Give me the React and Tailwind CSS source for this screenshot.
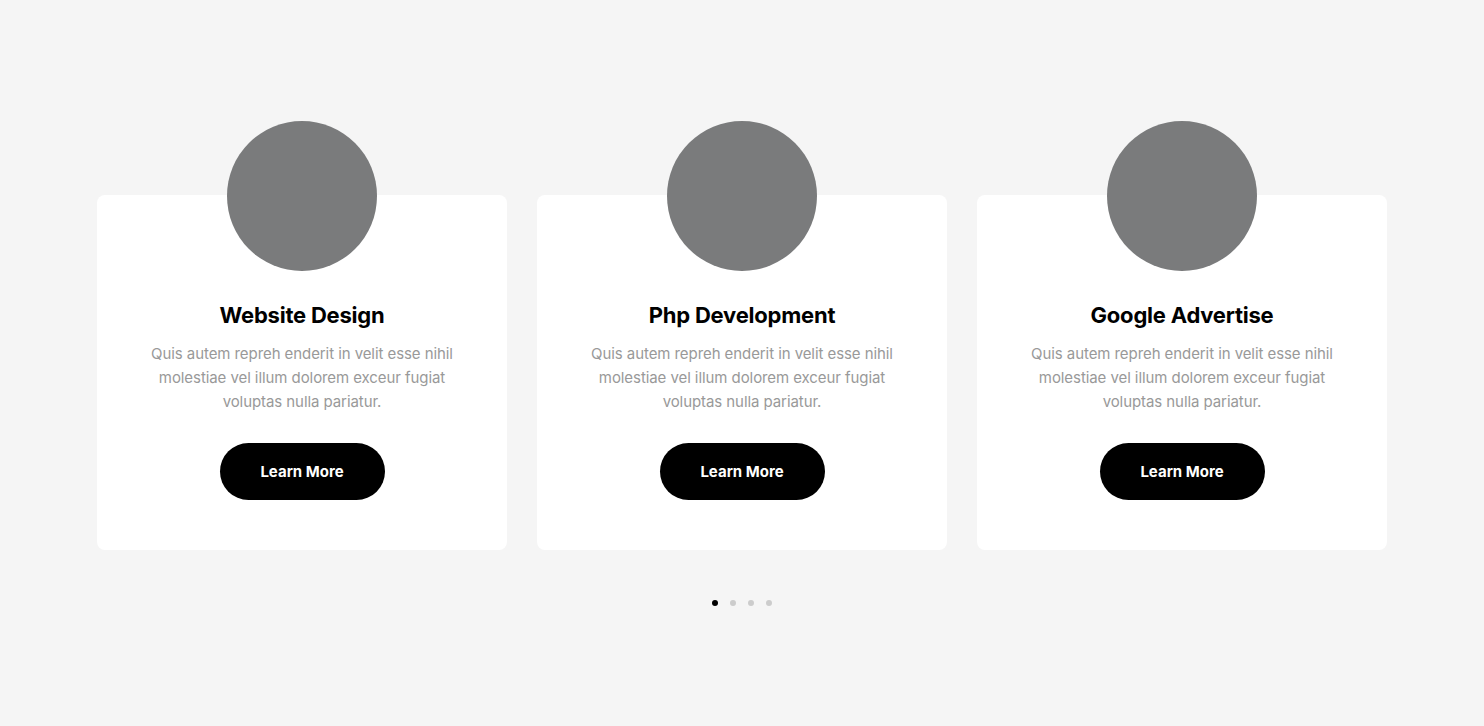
export default function App() {
  const cards = ["Website Design", "Php Development", "Google Advertise"];
  return (
    <div className="min-h-[726px] w-full bg-[#f5f5f5] pt-[121px]" style={{ fontFamily: "Inter, 'Noto Sans', sans-serif" }}>
      <div className="mx-auto grid w-[1290px] grid-cols-3 gap-[30px] pt-[74px]">
        {cards.map((t) => (
          <div key={t} className="flex flex-col items-center rounded-lg bg-white pb-[50px]">
            <div className="-mt-[74px] h-[150px] w-[150px] rounded-full bg-[#7a7b7c]" />
            <h3 className="mt-[29px] text-[22px] font-bold leading-[30px] tracking-[-0.01em] text-black">{t}</h3>
            <p className="mt-[12px] w-[320px] text-center text-[15px] leading-[24px] tracking-[-0.005em] text-[#999]">
              Quis autem repreh enderit in velit esse nihil molestiae vel illum dolorem exceur fugiat voluptas nulla pariatur.
            </p>
            <button className="mt-[29px] h-[57px] w-[165px] rounded-full bg-black pt-[2px] text-[15px] font-bold text-white">
              Learn More
            </button>
          </div>
        ))}
      </div>
      <div className="mt-[50px] flex justify-center gap-[12px]">
        <span className="h-[6px] w-[6px] rounded-full bg-black" />
        <span className="h-[6px] w-[6px] rounded-full bg-[#ccc]" />
        <span className="h-[6px] w-[6px] rounded-full bg-[#ccc]" />
        <span className="h-[6px] w-[6px] rounded-full bg-[#ccc]" />
      </div>
    </div>
  );
}
